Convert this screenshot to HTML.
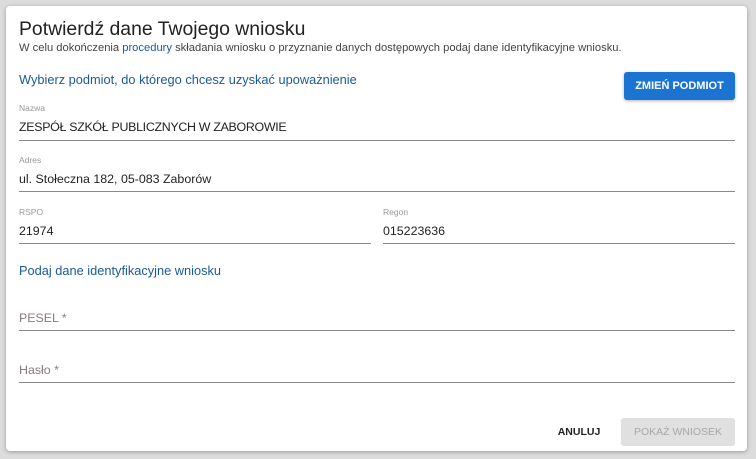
<!DOCTYPE html>
<html><head><meta charset="utf-8"><style>
*{margin:0;padding:0;box-sizing:border-box}
body{width:756px;height:459px;background:#dcdcdc;font-family:"Liberation Sans",Arial,sans-serif;position:relative;overflow:hidden}
.dlg{position:absolute;left:6px;top:6px;width:741px;height:445px;background:#fff;border-radius:4px;box-shadow:0 1px 4px rgba(0,0,0,.3)}
.a{position:absolute;white-space:nowrap}
.t{left:13px;top:12px;font-size:19.4px;color:#222}
.s{left:13px;top:36px;font-size:11.2px;color:#444}
.s b{font-weight:normal;color:#1a5a9a}
.blue{color:#1b5a96;font-size:12.8px}
.lbl{font-size:8.5px;color:#999}
.val{font-size:12.4px;color:#222}
.line{position:absolute;height:1px;background:#8a8a8a}
.ph{font-size:12.4px;color:#8a7a80}
.btn{position:absolute;border-radius:3px;font-size:11px;font-weight:bold;text-align:center}
</style></head><body>
<div class="dlg">
<div class="a t">Potwierdź dane Twojego wniosku</div>
<div class="a s">W celu dokończenia <b>procedury</b> składania wniosku o przyznanie danych dostępowych podaj dane identyfikacyjne wniosku.</div>
<div class="a blue" style="left:13px;top:66px">Wybierz podmiot, do którego chcesz uzyskać upoważnienie</div>
<div class="btn" style="left:618px;top:66px;width:111px;height:28px;line-height:28px;background:#1b74d2;color:#fff;box-shadow:0 1px 3px rgba(0,0,0,.3)">ZMIEŃ PODMIOT</div>
<div class="a lbl" style="left:13px;top:97px">Nazwa</div>
<div class="a val" style="left:13px;top:114px;letter-spacing:-0.3px">ZESPÓŁ SZKÓŁ PUBLICZNYCH W ZABOROWIE</div>
<div class="line" style="left:13px;top:134px;width:716px"></div>
<div class="a lbl" style="left:13px;top:149px">Adres</div>
<div class="a val" style="left:13px;top:166px">ul. Stołeczna 182, 05-083 Zaborów</div>
<div class="line" style="left:13px;top:185px;width:716px"></div>
<div class="a lbl" style="left:13px;top:201px">RSPO</div>
<div class="a val" style="left:13px;top:218px">21974</div>
<div class="line" style="left:13px;top:237px;width:352px"></div>
<div class="a lbl" style="left:377px;top:201px">Regon</div>
<div class="a val" style="left:377px;top:218px">015223636</div>
<div class="line" style="left:377px;top:237px;width:352px"></div>
<div class="a blue" style="left:13px;top:257px">Podaj dane identyfikacyjne wniosku</div>
<div class="a ph" style="left:13px;top:305px">PESEL *</div>
<div class="line" style="left:13px;top:324px;width:716px"></div>
<div class="a ph" style="left:13px;top:357px">Hasło *</div>
<div class="line" style="left:13px;top:376px;width:716px"></div>
<div class="btn" style="left:538px;top:412px;width:70px;height:28px;line-height:28px;color:#222;font-size:10.5px">ANULUJ</div>
<div class="btn" style="left:615px;top:412px;width:114px;height:28px;line-height:28px;background:#e0e0e0;color:#a8a8a8;font-weight:normal;font-size:10.5px">POKAŻ WNIOSEK</div>
</div>
</body></html>
